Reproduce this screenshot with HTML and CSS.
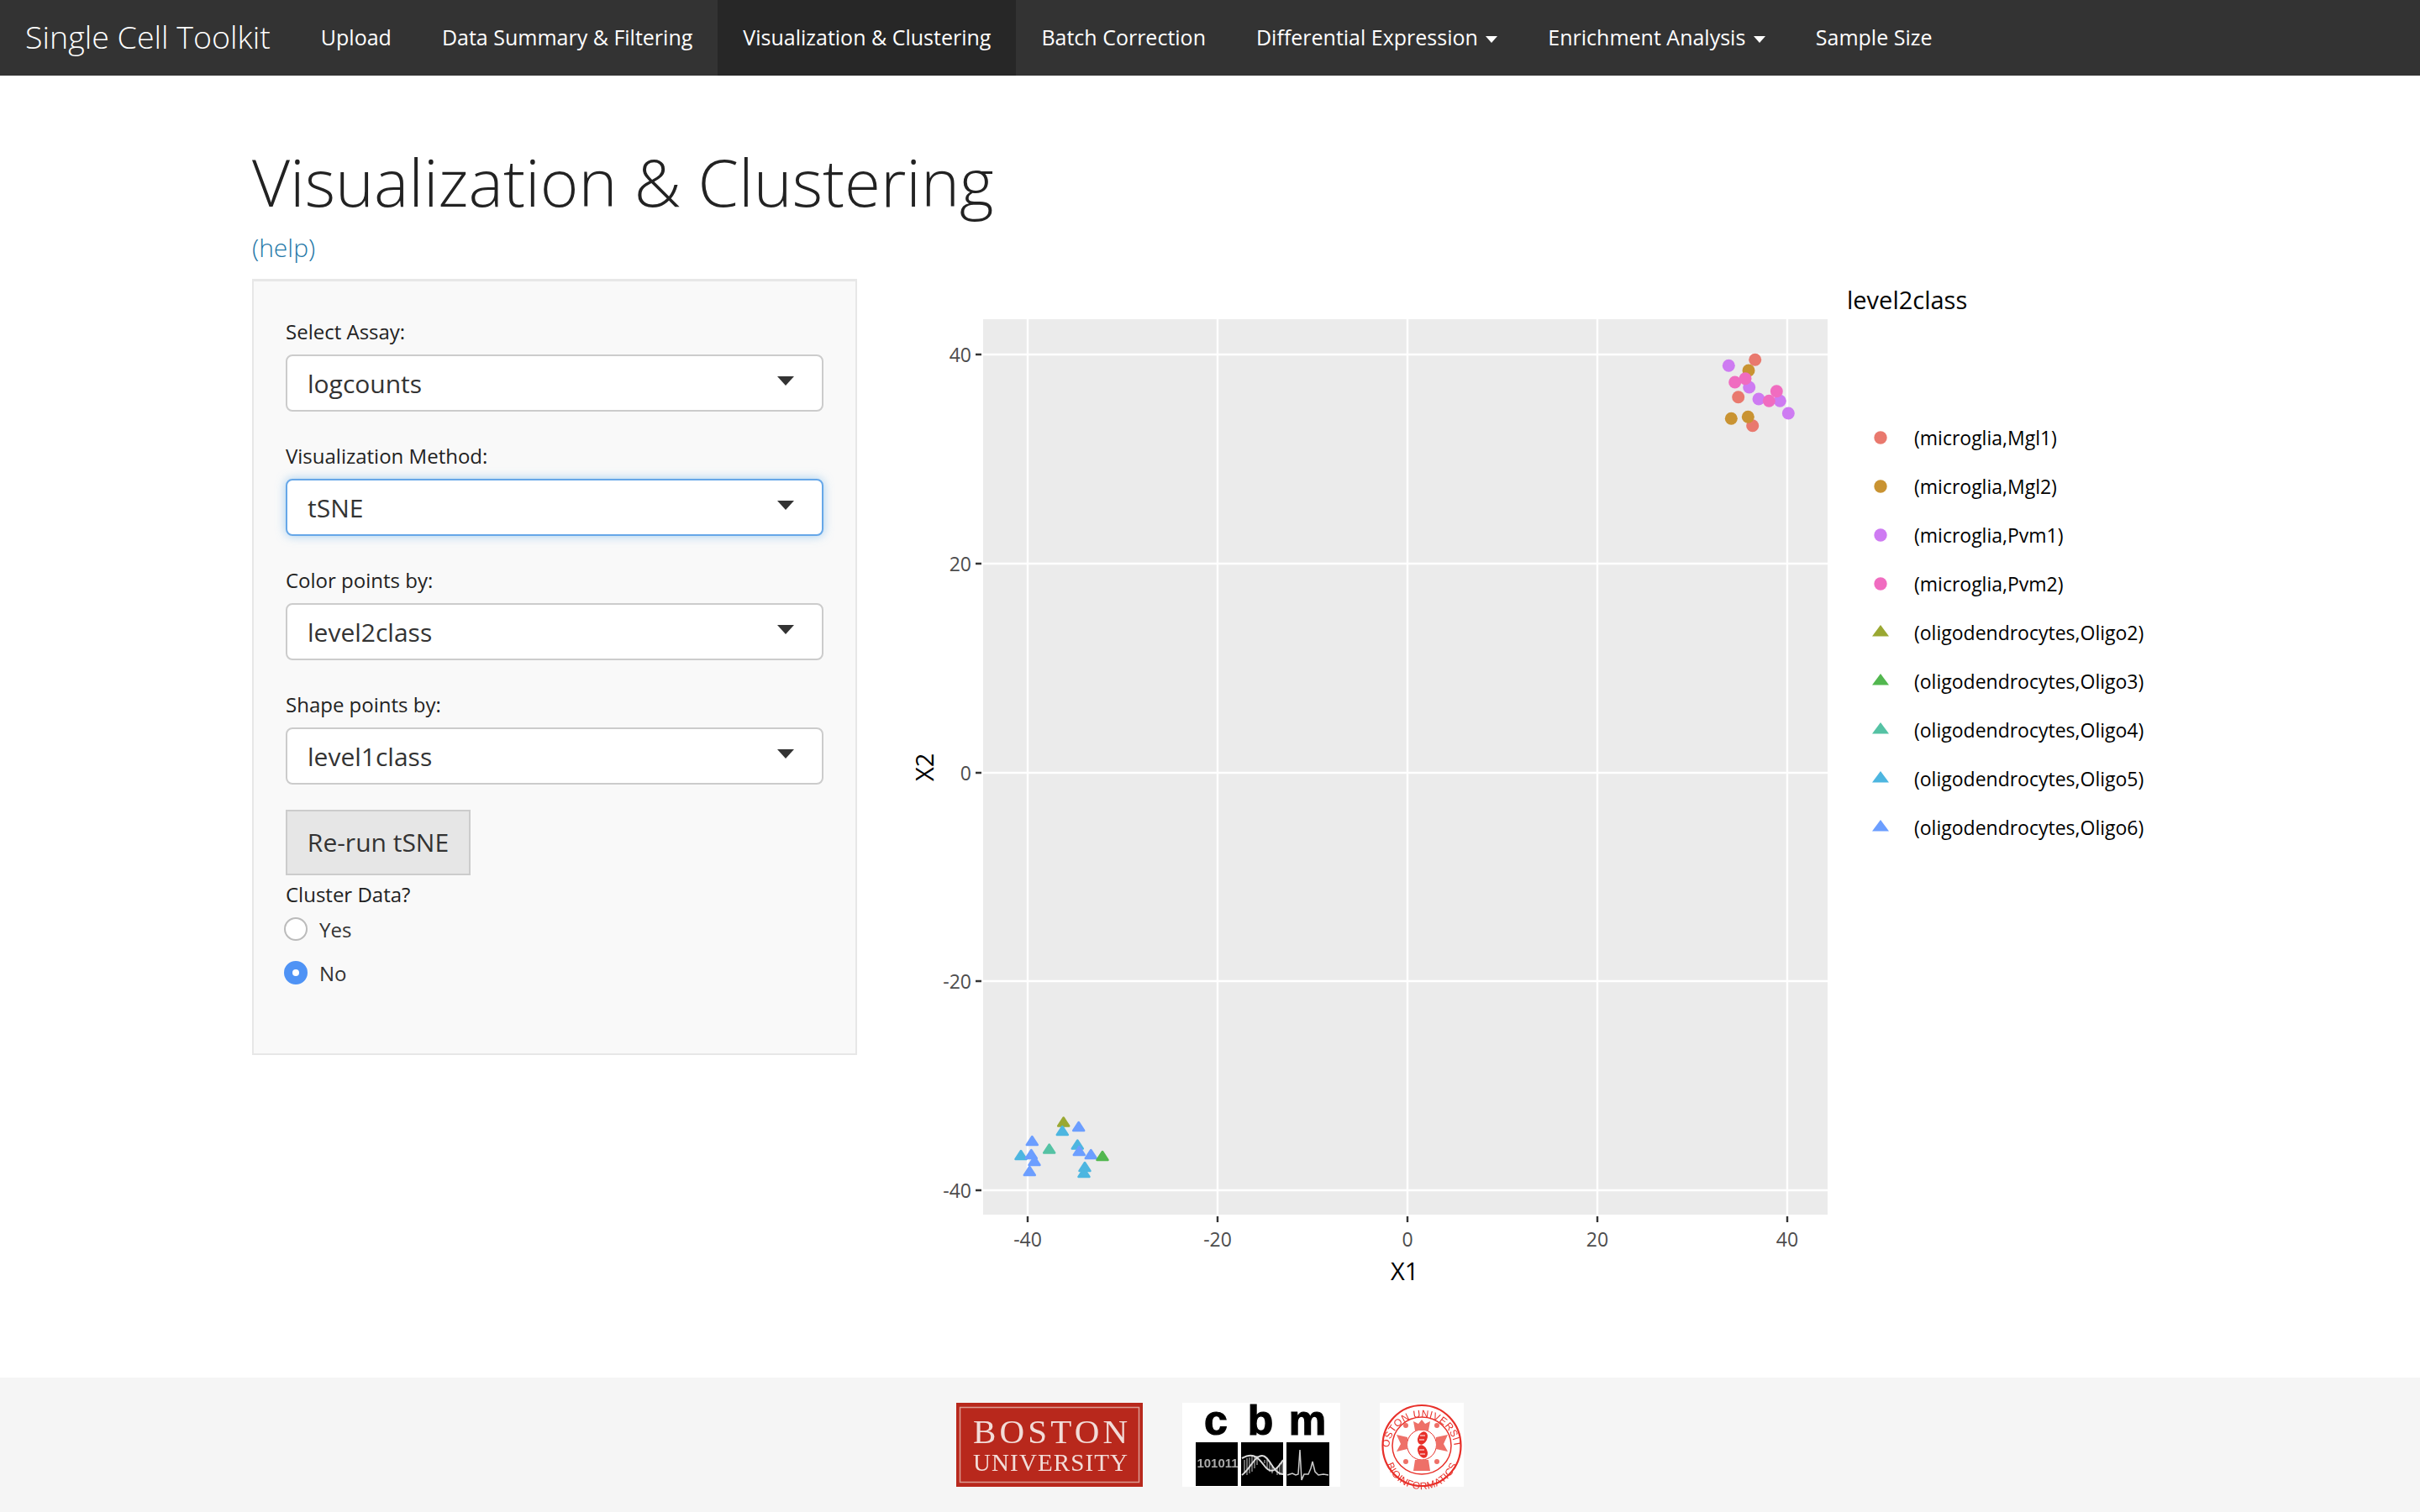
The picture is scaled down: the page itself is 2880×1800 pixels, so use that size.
FILE: index.html
```html
<!DOCTYPE html>
<html lang="en">
<head>
<meta charset="utf-8">
<title>Single Cell Toolkit</title>
<link rel="stylesheet" href="styles.css">
</head>
<body>
<nav class="navbar">
  <a class="brand">Single Cell Toolkit</a>
  <ul class="nav-list">
    <li class="nav-item">Upload</li>
    <li class="nav-item">Data Summary &amp; Filtering</li>
    <li class="nav-item active">Visualization &amp; Clustering</li>
    <li class="nav-item">Batch Correction</li>
    <li class="nav-item">Differential Expression <span class="caret"></span></li>
    <li class="nav-item">Enrichment Analysis <span class="caret"></span></li>
    <li class="nav-item">Sample Size</li>
  </ul>
</nav>
<main class="container">
  <h1 class="title">Visualization &amp; Clustering</h1>
  <a class="help">(help)</a>
  <div class="row">
    <form class="well">
      <div class="field">
        <label class="field-label">Select Assay:</label>
        <div class="select"><span>logcounts</span><span class="select-caret"></span></div>
      </div>
      <div class="field">
        <label class="field-label">Visualization Method:</label>
        <div class="select focused"><span>tSNE</span><span class="select-caret"></span></div>
      </div>
      <div class="field">
        <label class="field-label">Color points by:</label>
        <div class="select"><span>level2class</span><span class="select-caret"></span></div>
      </div>
      <div class="field">
        <label class="field-label">Shape points by:</label>
        <div class="select"><span>level1class</span><span class="select-caret"></span></div>
      </div>
      <div class="button">Re-run tSNE</div>
      <div class="cluster-label">Cluster Data?</div>
      <label class="radio"><span class="radio-dot"></span>Yes</label>
      <label class="radio"><span class="radio-dot on"></span>No</label>
    </form>
    <svg class="plot" viewBox="1080 332 1500 1200" width="1500" height="1200" xmlns="http://www.w3.org/2000/svg">
      <defs>
        <path id="tri" d="M0 -9 L6.500 1 L-6.500 1 Z" stroke-width="2.500" stroke-linejoin="round"/>
      </defs>
      <rect class="plot-bg" x="1170" y="380" width="1005" height="1066"/>
      <g class="grid">
        <path d="M1223 380V1446M1449 380V1446M1675 380V1446M1901 380V1446M2127 380V1446"/>
        <path d="M1170 422H2175M1170 671H2175M1170 920H2175M1170 1168H2175M1170 1417H2175"/>
      </g>
      <g class="ticks">
        <path d="M1161 422H1168M1161 671H1168M1161 920H1168M1161 1168H1168M1161 1417H1168"/>
        <path d="M1223 1448V1455M1449 1448V1455M1675 1448V1455M1901 1448V1455M2127 1448V1455"/>
      </g>
      <g class="tick-y">
        <text x="1156" y="431">40</text>
        <text x="1156" y="680">20</text>
        <text x="1156" y="929">0</text>
        <text x="1156" y="1177">-20</text>
        <text x="1156" y="1426">-40</text>
      </g>
      <g class="tick-x">
        <text x="1223" y="1484">-40</text>
        <text x="1449" y="1484">-20</text>
        <text x="1675" y="1484">0</text>
        <text x="1901" y="1484">20</text>
        <text x="2127" y="1484">40</text>
      </g>
      <text class="axis-title" x="1655" y="1524">X1</text>
      <text class="axis-title" transform="translate(1111 930) rotate(-90)">X2</text>

      <g class="c1"><circle cx="2088.7" cy="428.3" r="7.5"/><circle cx="2068.7" cy="472.7" r="7.5"/><circle cx="2085.7" cy="506.7" r="7.5"/></g>
      <g class="c2"><circle cx="2081" cy="441" r="7.5"/><circle cx="2060.3" cy="498.3" r="7.5"/><circle cx="2080.3" cy="496.3" r="7.5"/></g>
      <g class="c3"><circle cx="2057.3" cy="435.3" r="7.5"/><circle cx="2081.7" cy="461" r="7.5"/><circle cx="2093" cy="475" r="7.5"/><circle cx="2118.3" cy="477.3" r="7.5"/><circle cx="2128.3" cy="492" r="7.5"/></g>
      <g class="c4"><circle cx="2064.7" cy="455" r="7.5"/><circle cx="2077" cy="450.7" r="7.5"/><circle cx="2114.3" cy="465.7" r="7.5"/><circle cx="2105.3" cy="477.3" r="7.5"/></g>

      <g class="c5"><use href="#tri" x="1265.7" y="1339.5"/></g>
      <g class="c7"><use href="#tri" x="1248.7" y="1371.500"/></g>
      <g class="c8">
        <use href="#tri" x="1264.3" y="1350"/>
        <use href="#tri" x="1282.3" y="1366.500"/>
        <use href="#tri" x="1215" y="1379"/>
        <use href="#tri" x="1291" y="1393"/>
        <use href="#tri" x="1290" y="1400"/>
      </g>
      <g class="c9">
        <use href="#tri" x="1283.7" y="1345"/>
        <use href="#tri" x="1228.3" y="1362"/>
        <use href="#tri" x="1284.3" y="1374"/>
        <use href="#tri" x="1227.3" y="1378"/>
        <use href="#tri" x="1231" y="1386"/>
        <use href="#tri" x="1298.3" y="1378"/>
        <use href="#tri" x="1225.3" y="1398"/>
      </g>
      <g class="c6"><use href="#tri" x="1312" y="1380"/></g>

      <text class="legend-title" x="2198" y="368">level2class</text>
      <g class="c1"><circle cx="2238" cy="521" r="7.7"/></g>
      <g class="c2"><circle cx="2238" cy="579" r="7.7"/></g>
      <g class="c3"><circle cx="2238" cy="637" r="7.7"/></g>
      <g class="c4"><circle cx="2238" cy="695" r="7.7"/></g>
      <g class="c5"><polygon points="2238,744 2248,757.5 2228,757.5"/></g>
      <g class="c6"><polygon points="2238,802 2248,815.5 2228,815.5"/></g>
      <g class="c7"><polygon points="2238,860 2248,873.5 2228,873.5"/></g>
      <g class="c8"><polygon points="2238,918 2248,931.5 2228,931.5"/></g>
      <g class="c9"><polygon points="2238,976 2248,989.5 2228,989.5"/></g>
      <g class="legend-text">
        <text x="2278" y="530">(microglia,Mgl1)</text>
        <text x="2278" y="588">(microglia,Mgl2)</text>
        <text x="2278" y="646">(microglia,Pvm1)</text>
        <text x="2278" y="704">(microglia,Pvm2)</text>
        <text x="2278" y="762">(oligodendrocytes,Oligo2)</text>
        <text x="2278" y="820">(oligodendrocytes,Oligo3)</text>
        <text x="2278" y="878">(oligodendrocytes,Oligo4)</text>
        <text x="2278" y="936">(oligodendrocytes,Oligo5)</text>
        <text x="2278" y="994">(oligodendrocytes,Oligo6)</text>
      </g>
    </svg>
  </div>
</main>
<footer class="footer">
  <svg class="logo" width="222" height="100" viewBox="0 0 222 100" xmlns="http://www.w3.org/2000/svg">
    <rect width="222" height="100" fill="#b8281c"/>
    <rect x="4.500" y="5.500" width="213" height="89" fill="none" stroke="#dc9c92" stroke-width="1.500"/>
    <text class="bu-1" x="112" y="48" text-anchor="middle" textLength="184">BOSTON</text>
    <text class="bu-2" x="112" y="81" text-anchor="middle" textLength="184">UNIVERSITY</text>
  </svg>
  <svg class="logo" width="188" height="100" viewBox="0 0 188 100" xmlns="http://www.w3.org/2000/svg">
    <rect width="188" height="100" fill="#fff"/>
    <text class="cbm" x="40" y="38" text-anchor="middle">c</text>
    <text class="cbm" x="93" y="38" text-anchor="middle">b</text>
    <text class="cbm" x="149" y="38" text-anchor="middle">m</text>
    <rect x="16" y="47" width="50" height="52"/>
    <rect x="70" y="47" width="50" height="52"/>
    <rect x="124" y="47" width="51" height="52"/>
    <text class="cbm-bin" x="42" y="77" text-anchor="middle">101011</text>
    <path d="M74 68V84M77 66V86M80 65V84M83 64V82M86 63V78M89 63V74M98 68V72M101 68V78M104 72V82M107 74V84M113 76V86M116 72V86M119 70V84" stroke="#aaa" stroke-width="1.200"/>
    <path d="M71 86C80 80 86 63 95 63C104 63 108 85 120 85M71 66C82 60 88 62 97 74C104 84 110 84 120 68" fill="none" stroke="#ddd" stroke-width="2"/>
    <path d="M125 86L131 84L135 86L138 85L140 56L142 92L145 85L150 85L153 78L155 70L158 82L162 86L168 85L174 86" fill="none" stroke="#ccc" stroke-width="1.500"/>
  </svg>
  <svg class="logo" width="100" height="100" viewBox="0 0 100 100" xmlns="http://www.w3.org/2000/svg">
    <rect width="100" height="100" fill="#fff"/>
    <g class="seal">
      <ellipse cx="50" cy="51" rx="46.500" ry="48" stroke-width="2.200"/>
      <ellipse cx="50" cy="51" rx="35" ry="34" stroke-width="1.500"/>
      <ellipse cx="50" cy="50" rx="17.500" ry="18" stroke-width="1"/>
    </g>
    <path id="seal-top" d="M11 56A39 39 0 0 1 89 56" fill="none"/>
    <path id="seal-bot" d="M6 60A44 43 0 0 0 94 60" fill="none"/>
    <text class="seal-text"><textPath href="#seal-top" startOffset="50%" text-anchor="middle">BOSTON UNIVERSITY</textPath></text>
    <text class="seal-text"><textPath href="#seal-bot" startOffset="50%" text-anchor="middle">BIOINFORMATICS</textPath></text>
    <g class="seal-fill">
      <path d="M42 33L40 22L46 25L50 20L54 25L60 22L58 33Z"/>
      <path d="M42 68L40 81L60 81L58 68Z"/>
      <path d="M33 41L20 38L25 49L20 58L33 55Z"/>
      <path d="M67 41L81 38L76 49L81 58L67 55Z"/>
      <circle cx="31" cy="27" r="3"/><circle cx="68" cy="27" r="3"/>
      <circle cx="31" cy="70" r="3"/><circle cx="68" cy="70" r="3"/>
    </g>
    <ellipse class="seal-dna" cx="51" cy="42" rx="5.500" ry="8" transform="rotate(25 51 42)"/>
    <ellipse class="seal-dna" cx="51" cy="58" rx="5.500" ry="8" transform="rotate(-25 51 58)"/>
    <path d="M48 39H54M47 44H53M47 56H53M48 61H54" stroke="#fff" stroke-width="1"/>
  </svg>
</footer>
</body>
</html>
```
FILE: styles.css
```css
* { box-sizing: border-box; }
html, body { margin: 0; padding: 0; }
body {
  width: 2880px;
  height: 1800px;
  background: #fff;
  color: #222;
  font-family: "Open Sans", sans-serif;
  display: flex;
  flex-direction: column;
  overflow: hidden;
}
.navbar {
  height: 90px;
  background: #333;
  color: #fff;
  display: flex;
  align-items: stretch;
  flex: none;
}
.brand {
  padding: 0 30px;
  font-size: 37.6px;
  font-weight: 300;
  line-height: 88px;
}
.nav-list { list-style: none; margin: 0; padding: 0; display: flex; }
.nav-item {
  padding: 0 30px;
  font-size: 25px;
  font-weight: 400;
  line-height: 88px;
  white-space: nowrap;
}
.nav-item.active { background: #272727; }
.caret {
  display: inline-block;
  width: 0;
  height: 0;
  margin-left: 3px;
  vertical-align: middle;
  border-top: 8px solid #fff;
  border-left: 7.5px solid transparent;
  border-right: 7.5px solid transparent;
}
.container { width: 2340px; margin: 0 auto; padding: 0 30px; flex: 1; }
.title {
  margin: 74px 0 0;
  font-size: 78px;
  font-weight: 300;
  line-height: 104px;
  color: #222;
}
.help {
  display: block;
  margin-top: 6px;
  font-size: 30px;
  font-weight: 300;
  line-height: 42px;
  color: #1f78a8;
}
.row { display: flex; margin-top: 16px; }
.well {
  width: 720px;
  height: 924px;
  flex: none;
  background: #f9f9f9;
  border: 2px solid #e7e7e7;
  border-top-width: 3px;
  padding: 44px 38px 0 38px;
  margin-right: 60px;
}
.field { height: 148px; }
.field-label {
  display: block;
  font-size: 24px;
  line-height: 32px;
  margin-bottom: 11px;
  color: #222;
}
.select {
  width: 640px;
  height: 68px;
  background: #fff;
  border: 2px solid #ccc;
  border-radius: 8px;
  padding: 0 24px;
  display: flex;
  align-items: center;
  justify-content: space-between;
  font-size: 30px;
  color: #333;
}
.select.focused {
  border-color: #66a7e8;
  box-shadow: 0 0 12px rgba(102, 175, 233, .6);
}
.select-caret {
  width: 0;
  height: 0;
  margin-right: 9px;
  margin-top: -6px;
  border-top: 11px solid #333;
  border-left: 10px solid transparent;
  border-right: 10px solid transparent;
}
.button {
  width: 220px;
  height: 78px;
  margin-top: -7px;
  background: #e6e6e6;
  border: 2px solid #ccc;
  font-size: 30px;
  line-height: 74px;
  text-align: center;
  color: #333;
}
.cluster-label { font-size: 24px; line-height: 32px; margin-top: 7px; margin-bottom: -1px; }
.radio {
  display: flex;
  align-items: center;
  height: 52px;
  font-size: 24px;
  color: #333;
  margin-left: -2px;
}
.radio-dot {
  width: 28px;
  height: 28px;
  border-radius: 50%;
  background: #fff;
  border: 2px solid #bbb;
  margin-right: 14px;
  flex: none;
}
.radio-dot.on { background: #4f93f5; border: 10px solid #4f93f5; position: relative; }
.radio-dot.on::after {
  content: "";
  position: absolute;
  inset: 0;
  background: #fff;
  border-radius: 50%;
}
.plot { flex: none; display: block; }
.plot text { font-family: "Open Sans", sans-serif; }
.plot-bg { fill: #ebebeb; }
.grid path { fill: none; stroke: #fff; stroke-width: 2.4; }
.ticks path { fill: none; stroke: #333; stroke-width: 2.4; }
.tick-y text, .tick-x text { font-size: 23px; fill: #4d4d4d; }
.tick-y text { text-anchor: end; }
.tick-x text { text-anchor: middle; }
.axis-title { font-size: 29px; fill: #000; }
.legend-title { font-size: 29px; fill: #000; }
.legend-text text { font-size: 23px; fill: #000; }
.c1 { fill: #e9796e; stroke: #e9796e; }
.c2 { fill: #c99332; stroke: #c99332; }
.c3 { fill: #ce7bf2; stroke: #ce7bf2; }
.c4 { fill: #f06cc0; stroke: #f06cc0; }
.c5 { fill: #9aa832; stroke: #9aa832; }
.c6 { fill: #52b74f; stroke: #52b74f; }
.c7 { fill: #55c2a4; stroke: #55c2a4; }
.c8 { fill: #4db6e0; stroke: #4db6e0; }
.c9 { fill: #6c9eff; stroke: #6c9eff; }
.c1 circle, .c2 circle, .c3 circle, .c4 circle { stroke: none; }
polygon { stroke: none; }
.footer {
  height: 160px;
  flex: none;
  background: #f5f5f5;
  display: flex;
  justify-content: center;
  align-items: center;
  gap: 47px;
}
.logo { display: block; filter: blur(.5px); overflow: visible; }
.bu-1 { font-family: "Liberation Serif", serif; font-size: 41px; fill: #f2dcd8; }
.bu-2 { font-family: "Liberation Serif", serif; font-size: 29px; fill: #f2dcd8; }
.cbm { font-family: "Liberation Sans", sans-serif; font-weight: 700; font-size: 50px; fill: #000; stroke: #000; stroke-width: 1.2px; }
.cbm-bin { font-family: "Liberation Sans", sans-serif; font-weight: 700; font-size: 15px; fill: #aaa; }
.seal ellipse { fill: none; stroke: #e8302a; }
.seal-fill { fill: #ee7068; }
.seal-dna { fill: #e8302a; }
.seal-text { font-family: "Liberation Sans", sans-serif; font-size: 12px; letter-spacing: .5px; fill: #e8302a; }
```
